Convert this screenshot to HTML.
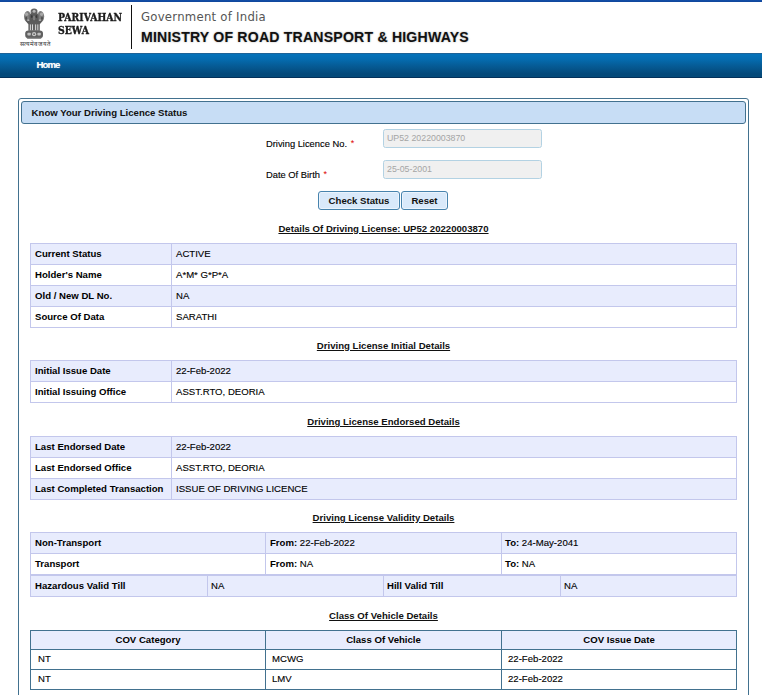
<!DOCTYPE html>
<html lang="en">
<head>
<meta charset="utf-8">
<title>Know Your Driving Licence Status</title>
<style>
html,body{margin:0;padding:0;background:#fff;}
body{width:762px;height:695px;position:relative;overflow:hidden;font-family:"Liberation Sans",Arial,sans-serif;font-size:9.6px;color:#111;}
.abs{position:absolute;}
#topstrip{left:0;top:0;width:762px;height:2px;background:linear-gradient(#134fa8,#10469a);}
#brand1,#brand2{left:58px;font-family:"DejaVu Serif","Liberation Serif",serif;font-weight:bold;font-size:10.3px;line-height:12px;color:#1c1c1c;-webkit-text-stroke:0.35px #1c1c1c;transform-origin:0 0;transform:scaleX(0.905);white-space:nowrap;}
#brand1{top:11px;}
#brand2{top:24.3px;}
#divider{left:131px;top:5px;width:1px;height:44px;background:#111;}
#goi{left:141px;top:10px;font-family:"DejaVu Sans","Liberation Sans",sans-serif;font-size:11.7px;line-height:14px;color:#555;letter-spacing:0.25px;white-space:nowrap;}
#ministry{left:141px;top:28.5px;font-family:"Liberation Sans",Arial,sans-serif;font-weight:bold;font-size:14.1px;line-height:17px;color:#111;letter-spacing:0.2px;white-space:nowrap;text-shadow:0 0 2px rgba(0,0,0,0.35);}
#motto{left:15px;top:39.5px;width:40px;text-align:center;font-size:6.1px;line-height:8px;color:#2a2a2a;white-space:nowrap;font-family:"Liberation Sans","Noto Sans CJK SC",sans-serif;}
#nav{left:0;top:53px;width:762px;height:25px;background:linear-gradient(#1d6398 0,#1d6398 1px,#0572b9 1.5px,#056cb0 6px,#065b95 13px,#04497a 21px,#044a7a 23.5px,#03315b 24.5px,#03315b 25px);}
#home{left:36.5px;top:0;line-height:23px;color:#fff;font-weight:bold;font-size:9.6px;letter-spacing:-0.9px;text-shadow:0 0 1px rgba(255,255,255,0.5);}
#panel{left:18px;top:98px;width:729px;height:620px;border:1px solid #42718f;border-radius:3px;background:#fff;}
#phead{left:21px;top:101px;width:723px;height:21px;border:1px solid #42718f;border-radius:3px;background:#c7ddf5;}
#phead span{position:absolute;left:9.6px;top:0;line-height:21px;font-weight:bold;color:#111;white-space:nowrap;}
.lbl{white-space:nowrap;line-height:12px;color:#000;font-size:9.35px;}
.lbl b{-webkit-text-stroke:0;color:#d00;font-weight:normal;margin-left:1px;position:relative;top:-1px;font-size:9px;}
.inp{left:383px;width:157px;height:17px;border:1px solid #b3d2e3;border-radius:2.5px;background:#f0f0f0;color:#a5a5a5;font-size:8.8px;line-height:17px;text-indent:3px;white-space:nowrap;}
.btn{top:191px;height:17px;border:1px solid #4783ad;border-radius:3px;background:#d9e9fa;box-shadow:inset 0 0 0 1px #ecf4fd;font-weight:bold;line-height:17px;text-align:center;color:#111;white-space:nowrap;}
.hd{left:19px;width:729px;text-align:center;font-weight:bold;text-decoration:underline;line-height:12px;white-space:nowrap;color:#111;}
table{position:absolute;left:30px;width:707px;border-collapse:collapse;table-layout:fixed;font-size:9.6px;}
td,th{border:1px solid #c3c7ec;height:19px;padding:0 0 1px 4px;line-height:19px;text-align:left;vertical-align:middle;white-space:nowrap;overflow:hidden;font-weight:normal;color:#000;}
td,.lbl{-webkit-text-stroke:0.12px #000;}
td.k,td b{font-weight:bold;-webkit-text-stroke:0;}
tr.o td{background:#e8ecfd;}
table.cov td,table.cov th{border-color:#42718f;padding:0 0 1px 7px;height:18px;line-height:18px;}
table.cov th{background:#e8ecfd;font-weight:bold;text-align:center;padding:0 0 1px 0;height:17px;line-height:17px;}
td.p3{padding-left:3px;}
table.cov td+td{padding-left:6px;}
</style>
</head>
<body>
<div id="topstrip" class="abs"></div>

<svg class="abs" style="left:15px;top:4px" width="40" height="40" viewBox="0 0 40 40">
  <defs><filter id="bl" x="-10%" y="-10%" width="120%" height="120%"><feGaussianBlur stdDeviation="0.45"/></filter></defs>
  <g filter="url(#bl)">
    <!-- side lions -->
    <ellipse cx="12.6" cy="12.6" rx="3.6" ry="5.6" fill="#7c7c7c"/>
    <ellipse cx="25.6" cy="12.6" rx="3.6" ry="5.6" fill="#7c7c7c"/>
    <!-- central lion -->
    <ellipse cx="19.1" cy="8.6" rx="3.7" ry="4.2" fill="#636363"/>
    <rect x="14.6" y="9.5" width="9" height="10.5" rx="2.5" fill="#5a5a5a"/>
    <ellipse cx="19.1" cy="7.2" rx="1.5" ry="1.5" fill="#b5b5b5"/>
    <ellipse cx="11.6" cy="10.2" rx="1.6" ry="1.7" fill="#a9a9a9"/>
    <ellipse cx="26.6" cy="10.2" rx="1.6" ry="1.7" fill="#a9a9a9"/>
    <ellipse cx="19.1" cy="14" rx="1.3" ry="2.6" fill="#7d7d7d"/>
    <ellipse cx="15.500" cy="8.2" rx="0.7" ry="1.800" fill="#d8d8d8" opacity="0.7"/>
    <ellipse cx="22.700" cy="8.2" rx="0.7" ry="1.800" fill="#d8d8d8" opacity="0.7"/>
    <ellipse cx="16.800" cy="12.400" rx="0.8" ry="1.500" fill="#2f2f2f" opacity="0.8"/>
    <ellipse cx="21.400" cy="12.400" rx="0.8" ry="1.500" fill="#2f2f2f" opacity="0.8"/>
    <ellipse cx="11.200" cy="14.200" rx="0.9" ry="1.800" fill="#444" opacity="0.8"/>
    <ellipse cx="27" cy="14.200" rx="0.9" ry="1.800" fill="#444" opacity="0.8"/>
    <ellipse cx="13.200" cy="16.600" rx="1" ry="1.300" fill="#c4c4c4" opacity="0.7"/>
    <ellipse cx="25" cy="16.600" rx="1" ry="1.300" fill="#c4c4c4" opacity="0.7"/>
    <path d="M10.4 15.5c1 3 2.4 4.6 4.2 5.2h9c1.800-.6 3.200-2.200 4.200-5.200l-2.400 1.500h-12.600z" fill="#5c5c5c"/>
    <!-- legs -->
    <rect x="13.4" y="19.6" width="11.4" height="7.2" fill="#606060"/>
    <rect x="14.9" y="20.4" width="0.9" height="6" fill="#e6e6e6"/>
    <rect x="17.1" y="20.4" width="0.9" height="6" fill="#e6e6e6"/>
    <rect x="20.2" y="20.4" width="0.9" height="6" fill="#e6e6e6"/>
    <rect x="22.400" y="20.4" width="0.9" height="6" fill="#e6e6e6"/>
    <!-- abacus -->
    <rect x="10.200" y="26.4" width="17.800" height="7.8" rx="3.2" fill="#606060"/>
    <rect x="11.800" y="33.4" width="14.600" height="1.300" rx="0.6" fill="#777"/>
    <circle cx="19.1" cy="30.2" r="2.100" fill="#c9c9c9"/>
    <circle cx="19.1" cy="30.2" r="0.9" fill="#666"/>
    <rect x="12.400" y="28.8" width="3.400" height="2.700" rx="0.8" fill="#bdbdbd"/>
    <rect x="22.400" y="28.8" width="3.400" height="2.700" rx="0.8" fill="#bdbdbd"/>
  </g>
</svg>
<div id="motto" class="abs">सत्यमेव जयते</div>
<div id="brand1" class="abs">PARIVAHAN</div>
<div id="brand2" class="abs">SEWA</div>
<div id="divider" class="abs"></div>
<div id="goi" class="abs">Government of India</div>
<div id="ministry" class="abs">MINISTRY OF ROAD TRANSPORT &amp; HIGHWAYS</div>

<div id="nav" class="abs"><div id="home" class="abs">Home</div></div>

<div id="panel" class="abs"></div>
<div id="phead" class="abs"><span>Know Your Driving Licence Status</span></div>

<div class="abs lbl" style="left:266px;top:138px">Driving Licence No. <b>*</b></div>
<div class="abs inp" style="top:129px">UP52 20220003870</div>
<div class="abs lbl" style="left:266px;top:169px">Date Of Birth <b>*</b></div>
<div class="abs inp" style="top:160px">25-05-2001</div>
<div class="abs btn" style="left:318px;width:80px">Check Status</div>
<div class="abs btn" style="left:401px;width:45px">Reset</div>

<div class="abs hd" style="top:223px">Details Of Driving License: UP52 20220003870</div>
<table style="top:243px">
  <colgroup><col style="width:141px"><col></colgroup>
  <tr class="o"><td class="k">Current Status</td><td>ACTIVE</td></tr>
  <tr><td class="k">Holder's Name</td><td>A*M* G*P*A</td></tr>
  <tr class="o"><td class="k">Old / New DL No.</td><td>NA</td></tr>
  <tr><td class="k">Source Of Data</td><td>SARATHI</td></tr>
</table>

<div class="abs hd" style="top:340px">Driving License Initial Details</div>
<table style="top:360px">
  <colgroup><col style="width:141px"><col></colgroup>
  <tr class="o"><td class="k">Initial Issue Date</td><td>22-Feb-2022</td></tr>
  <tr><td class="k">Initial Issuing Office</td><td>ASST.RTO, DEORIA</td></tr>
</table>

<div class="abs hd" style="top:416px">Driving License Endorsed Details</div>
<table style="top:436px">
  <colgroup><col style="width:141px"><col></colgroup>
  <tr class="o"><td class="k">Last Endorsed Date</td><td>22-Feb-2022</td></tr>
  <tr><td class="k">Last Endorsed Office</td><td>ASST.RTO, DEORIA</td></tr>
  <tr class="o"><td class="k">Last Completed Transaction</td><td>ISSUE OF DRIVING LICENCE</td></tr>
</table>

<div class="abs hd" style="top:512px">Driving License Validity Details</div>
<table style="top:532px">
  <colgroup><col style="width:235px"><col style="width:236px"><col></colgroup>
  <tr class="o"><td class="k">Non-Transport</td><td><b>From:</b> 22-Feb-2022</td><td class="p3"><b>To:</b> 24-May-2041</td></tr>
  <tr><td class="k">Transport</td><td><b>From:</b> NA</td><td class="p3"><b>To:</b> NA</td></tr>
</table>
<table style="top:575px">
  <colgroup><col style="width:177px"><col style="width:176px"><col style="width:177px"><col></colgroup>
  <tr class="o"><td class="k">Hazardous Valid Till</td><td class="p3">NA</td><td class="k p3">Hill Valid Till</td><td class="p3">NA</td></tr>
</table>

<div class="abs hd" style="top:610px">Class Of Vehicle Details</div>
<table class="cov" style="top:630px">
  <colgroup><col style="width:235px"><col style="width:236px"><col></colgroup>
  <tr><th>COV Category</th><th>Class Of Vehicle</th><th>COV Issue Date</th></tr>
  <tr><td>NT</td><td>MCWG</td><td>22-Feb-2022</td></tr>
  <tr><td>NT</td><td>LMV</td><td>22-Feb-2022</td></tr>
</table>
</body>
</html>
